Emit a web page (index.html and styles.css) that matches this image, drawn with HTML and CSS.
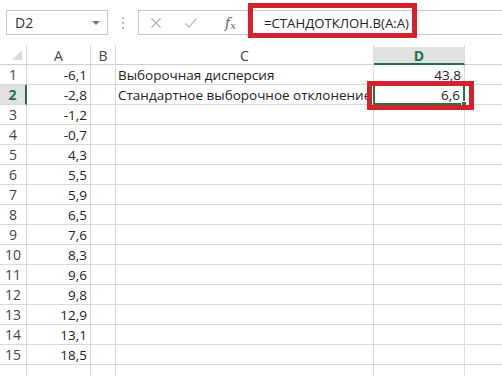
FILE: index.html
```html
<!DOCTYPE html>
<html>
<head>
<meta charset="utf-8">
<link rel="stylesheet" href="styles.css">
</head>
<body>
<div class="app">
  <div class="toolbar">
    <div class="namebox"><span class="nb-text">D2</span><span class="nb-arrow"></span></div>
    <div class="dots"><i></i><i></i><i></i></div>
    <div class="fbar">
      <span class="ficon">
        <svg width="12" height="12" viewBox="0 0 12 12"><path d="M1.5 1.5 L10.5 10.5 M10.5 1.5 L1.5 10.5" stroke="#b4b4b4" stroke-width="1.4" fill="none"/></svg>
      </span>
      <span class="ficon">
        <svg width="14" height="12" viewBox="0 0 14 12"><path d="M1.5 6.5 L5 10 L12.5 1.5" stroke="#c4c4c4" stroke-width="1.6" fill="none"/></svg>
      </span>
      <span class="fx">f<sub>x</sub></span>
      <span class="formula">=СТАНДОТКЛОН.В(A:A)</span>
    </div>
    <div class="mark mark-formula"></div>
  </div>
  <div class="sheet">
    <div class="hd corner"><span class="tri"></span></div>
    <div class="hd col">A</div>
    <div class="hd col">B</div>
    <div class="hd col">C</div>
    <div class="hd col active-col">D</div>
    <div class="hd col last"></div>

    <div class="rh">1</div><div class="c num">-6,1</div><div class="c"></div><div class="c txt">Выборочная дисперсия</div><div class="c num">43,8</div><div class="c last"></div>
    <div class="rh active-row">2</div><div class="c num">-2,8</div><div class="c"></div><div class="c txt">Стандартное выборочное отклонение</div><div class="c num sel">6,6<span class="handle"></span><span class="mark mark-cell"></span></div><div class="c last"></div>
    <div class="rh">3</div><div class="c num">-1,2</div><div class="c"></div><div class="c"></div><div class="c"></div><div class="c last"></div>
    <div class="rh">4</div><div class="c num">-0,7</div><div class="c"></div><div class="c"></div><div class="c"></div><div class="c last"></div>
    <div class="rh">5</div><div class="c num">4,3</div><div class="c"></div><div class="c"></div><div class="c"></div><div class="c last"></div>
    <div class="rh">6</div><div class="c num">5,5</div><div class="c"></div><div class="c"></div><div class="c"></div><div class="c last"></div>
    <div class="rh">7</div><div class="c num">5,9</div><div class="c"></div><div class="c"></div><div class="c"></div><div class="c last"></div>
    <div class="rh">8</div><div class="c num">6,5</div><div class="c"></div><div class="c"></div><div class="c"></div><div class="c last"></div>
    <div class="rh">9</div><div class="c num">7,6</div><div class="c"></div><div class="c"></div><div class="c"></div><div class="c last"></div>
    <div class="rh">10</div><div class="c num">8,3</div><div class="c"></div><div class="c"></div><div class="c"></div><div class="c last"></div>
    <div class="rh">11</div><div class="c num">9,6</div><div class="c"></div><div class="c"></div><div class="c"></div><div class="c last"></div>
    <div class="rh">12</div><div class="c num">9,8</div><div class="c"></div><div class="c"></div><div class="c"></div><div class="c last"></div>
    <div class="rh">13</div><div class="c num">12,9</div><div class="c"></div><div class="c"></div><div class="c"></div><div class="c last"></div>
    <div class="rh">14</div><div class="c num">13,1</div><div class="c"></div><div class="c"></div><div class="c"></div><div class="c last"></div>
    <div class="rh">15</div><div class="c num">18,5</div><div class="c"></div><div class="c"></div><div class="c"></div><div class="c last"></div>
    <div class="rh"></div><div class="c"></div><div class="c"></div><div class="c"></div><div class="c"></div><div class="c last"></div>
  </div>
</div>
</body>
</html>
```
FILE: styles.css
```css
* { box-sizing: border-box; }
html, body { margin: 0; padding: 0; background: #fff; }
body { width: 502px; height: 376px; overflow: hidden; font-family: "Open Sans", "Liberation Sans", sans-serif; color: #222; }
.app { position: relative; width: 502px; height: 376px; overflow: hidden; }

.toolbar { position: relative; height: 45px; display: flex; align-items: flex-start; padding-top: 10px; }
.namebox { margin-left: 6px; width: 102px; height: 25px; border: 1px solid #c8c8c8; display: flex; align-items: center; justify-content: space-between; padding: 0 7px 0 8px; }
.nb-text { font-size: 14px; color: #333; }
.nb-arrow { width: 0; height: 0; border-left: 4px solid transparent; border-right: 4px solid transparent; border-top: 4px solid #777; }
.dots { width: 30px; height: 25px; display: flex; flex-direction: column; align-items: center; justify-content: center; gap: 3px; }
.dots i { display: block; width: 2px; height: 2px; background: #b8b8b8; }
.fbar { flex: 1; height: 25px; margin-right: -10px; border: 1px solid #c8c8c8; display: flex; align-items: center; padding-left: 11px; }
.ficon { width: 34px; display: flex; align-items: center; }
.fx { width: 46px; padding-left: 7px; font-family: "DejaVu Serif", "Liberation Serif", serif; font-style: italic; font-size: 14px; color: #666; }
.fx sub { font-size: 10px; vertical-align: -1px; }
.formula { padding-left: 0; font-size: 13.2px; color: #222; }

.mark { position: absolute; border: 5px solid #d3222c; pointer-events: none; }
.mark-formula { left: 248px; top: 3px; width: 169px; height: 35px; }

.sheet { display: grid; grid-template-columns: 27px 64px 25px 258px 91px 1fr; grid-template-rows: repeat(16, 20px) 20px; font-size: 13.5px; }
.hd { border-right: 1px solid #dadada; border-bottom: 1px solid #d0d0d0; display: flex; align-items: center; justify-content: center; color: #444; font-size: 14px; padding-top: 2px; }
.hd.last { border-right: none; }
.corner { position: relative; }
.tri { position: absolute; right: 4px; bottom: 4px; width: 0; height: 0; border-left: 10px solid transparent; border-bottom: 10px solid #dcdcdc; }
.active-col { background: linear-gradient(#fff 0 2px, #e1e1e1 2px); color: #217346; font-weight: 700; border-bottom: 2px solid #217346; }

.rh { border-right: 1px solid #dadada; border-bottom: 1px solid #dadada; display: flex; align-items: center; justify-content: center; color: #444; font-size: 14px; }
.active-row { background: #e1e1e1; color: #217346; font-weight: 700; border-right: 2px solid #217346; }

.c { border-right: 1px solid #dadada; border-bottom: 1px solid #dadada; display: flex; align-items: center; white-space: nowrap; }
.c.last { border-right: none; }
.num { justify-content: flex-end; padding-right: 3px; }
.txt { padding-left: 2px; }
.sel { position: relative; border: 2px solid #217346; margin: -1px 0 0 -1px; padding-right: 3px; }
.handle { position: absolute; right: -4px; bottom: -4px; width: 6px; height: 6px; background: #217346; border: 1px solid #fff; }
.mark-cell { left: -8px; top: -5px; right: -11px; bottom: -7px; }
```
